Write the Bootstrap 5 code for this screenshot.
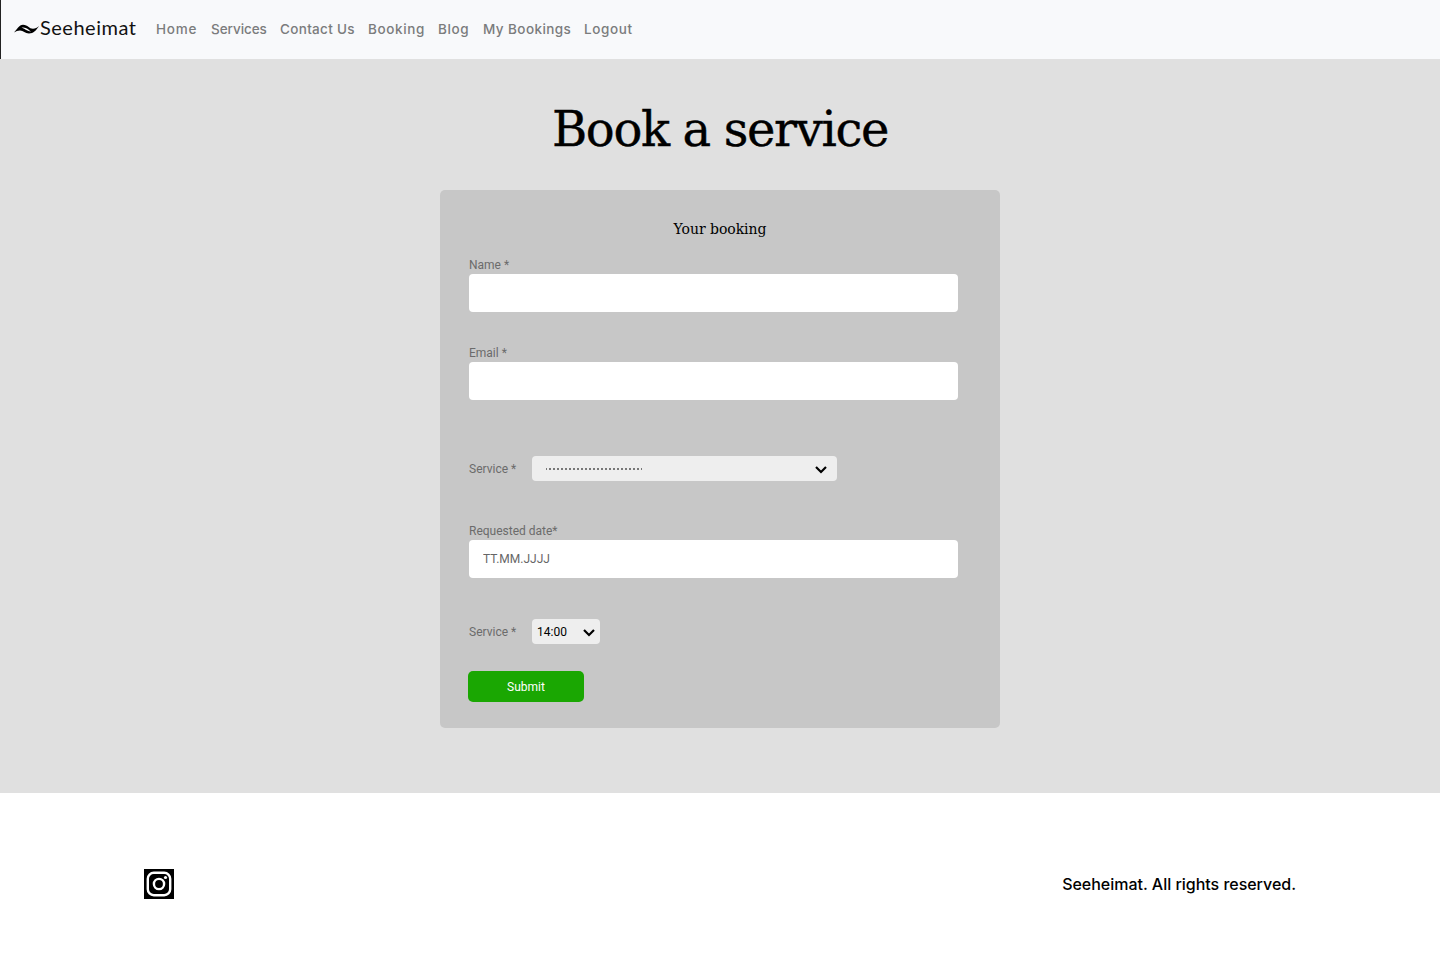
<!DOCTYPE html>
<html lang="en">
<head>
<meta charset="utf-8">
<meta name="viewport" content="width=device-width, initial-scale=1">
<title>Seeheimat – Book a service</title>
<link rel="stylesheet" href="https://cdn.jsdelivr.net/npm/bootstrap@5.3.0/dist/css/bootstrap.min.css">
<style>
body{font-family:Roboto,sans-serif;background:#fff;color:#000}
.site-nav{height:59px;background:#f8f9fb;border-left:1px solid #222;padding:0 0 0 13px}
.navbar-brand{width:142px;margin:0;padding:0 0 5px;font:400 20px/24px Lato,sans-serif;letter-spacing:.5px;color:#111;height:29px}
.navbar-brand svg{margin:4px 1px 0 0}
.site-nav .navbar-nav .nav-link{font:500 13.5px/18px Inter,sans-serif;color:#7b7c7d;padding:0 0 2px;white-space:nowrap}
.nav-item:nth-child(1){width:55px;letter-spacing:.8px}
.nav-item:nth-child(2){width:69px;letter-spacing:-.05px}
.nav-item:nth-child(3){width:88px;letter-spacing:.32px}
.nav-item:nth-child(4){width:70px;letter-spacing:.63px}
.nav-item:nth-child(5){width:45px;letter-spacing:.6px}
.nav-item:nth-child(6){width:101px;letter-spacing:.42px}
.nav-item:nth-child(7){letter-spacing:.63px}
.booking{height:734px;background:#e0e0e0}
.booking h1{font:400 48px/60px "DejaVu Serif",serif;margin:0;padding-top:40px;height:131px;letter-spacing:-1.35px;-webkit-text-stroke:.4px #000}
.panel{width:560px;height:538px;background:#c7c7c7;border-radius:5px;padding:29px 42px 0 29px}
.panel h2{font:400 14px/20px "DejaVu Serif",serif;margin:0 0 18px 6.5px;width:489px;letter-spacing:-.05px}
.panel label,.field-label{font-size:12px;line-height:17px;color:#6b6b6b;margin:0;display:block;height:17px}
.panel .form-control{height:38px;border:0;border-radius:4px;font-size:12px;padding:0 14px;background:#fff}
.form-control::placeholder{color:#666;opacity:1}
.row-label{width:63px;height:19px;padding-top:2px}
.picker{height:25px;background:#eee;border:0;border-radius:4px;font-size:12px;color:#000;line-height:25px}
.picker-value{padding-top:2px}
.dots{width:96px;height:2px;background:repeating-linear-gradient(90deg,#777 0 1px,transparent 1px 3px,#777 3px 4px)}
.btn-send{width:116px;height:31px;background:#1aa702;color:#fff;font-size:12px;line-height:29px;border:0;border-radius:5px;padding:2px 0 0;margin-left:-1px}
.site-footer{height:182px;padding:0 144px}
.site-footer p{font:500 16px/24px Inter,sans-serif;letter-spacing:-.02px}
</style>
</head>
<body>
<nav class="navbar navbar-expand site-nav">
  <a class="navbar-brand d-flex align-items-center" href="#">
    <svg width="25" height="10" viewBox="0 0 25 10"><path fill-rule="evenodd" d="M0 8.500C3 5.500 5 .8 9 .8c5 0 6 4 10 4 2.300 0 4-1 6-2.800C22.500 6 19.500 9.500 15 9.500c-4 0-5.500-3-9-3-2.300 0-4 .8-6 2Zm7.500-4.700c3 .2 5 3.600 9.500 3.700-2-1.300-5-5-9.500-3.700Z"/></svg><span>Seeheimat</span>
  </a>
  <ul class="navbar-nav">
    <li class="nav-item"><a class="nav-link" href="#">Home</a></li>
    <li class="nav-item"><a class="nav-link" href="#">Services</a></li>
    <li class="nav-item"><a class="nav-link" href="#">Contact Us</a></li>
    <li class="nav-item"><a class="nav-link" href="#">Booking</a></li>
    <li class="nav-item"><a class="nav-link" href="#">Blog</a></li>
    <li class="nav-item"><a class="nav-link" href="#">My Bookings</a></li>
    <li class="nav-item"><a class="nav-link" href="#">Logout</a></li>
  </ul>
</nav>
<main class="booking">
  <h1 class="text-center">Book a service</h1>
  <form class="panel mx-auto">
    <h2 class="text-center">Your booking</h2>
    <div style="margin-bottom:33px"><label for="name">Name *</label><input id="name" class="form-control"></div>
    <div style="margin-bottom:56px"><label for="email">Email *</label><input id="email" class="form-control"></div>
    <div class="d-flex align-items-center" style="margin-bottom:42px">
      <span class="field-label row-label">Service *</span>
      <button type="button" class="picker d-flex align-items-center justify-content-between" style="width:305px;padding:0 10px 0 14px"><span class="dots"></span><svg width="12" height="8" viewBox="0 0 12 8" fill="none" stroke="#000" stroke-width="2.200" style="margin-top:2px"><path d="m1 1 5 5 5-5"/></svg></button>
    </div>
    <div style="margin-bottom:41px"><label for="date">Requested date*</label><input id="date" class="form-control" placeholder="TT.MM.JJJJ"></div>
    <div class="d-flex align-items-center" style="margin-bottom:27px">
      <span class="field-label row-label">Service *</span>
      <button type="button" class="picker d-flex align-items-center justify-content-between" style="width:68px;padding:0 5px"><span class="picker-value">14:00</span><svg width="12" height="8" viewBox="0 0 12 8" fill="none" stroke="#000" stroke-width="2.200" style="margin-top:2px"><path d="m1 1 5 5 5-5"/></svg></button>
    </div>
    <button type="button" class="btn btn-send">Submit</button>
  </form>
</main>
<footer class="site-footer d-flex align-items-center justify-content-between">
  <a href="#" class="d-block" aria-label="Instagram"><svg class="d-block" width="30" height="30" viewBox="0 0 30 30"><path d="M0 0h30v30H0z"/><g fill="none" stroke="#fff" stroke-width="2.400"><rect x="3.800" y="3.800" width="22.400" height="22.400" rx="6"/><circle cx="15" cy="15" r="5.100"/></g><circle cx="21.500" cy="8.500" r="1.600" fill="#fff"/></svg></a>
  <p class="mb-0">Seeheimat. All rights reserved.</p>
</footer>
<script src="https://cdn.jsdelivr.net/npm/bootstrap@5.3.0/dist/js/bootstrap.bundle.min.js"></script>
</body>
</html>
